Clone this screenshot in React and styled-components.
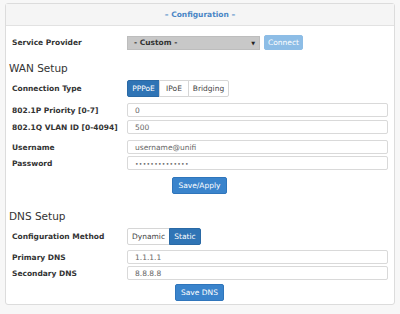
import React from 'react';
import styled, { createGlobalStyle } from 'styled-components';

const GlobalStyle = createGlobalStyle`
    body {
        margin: 0;
        background: #f7f7f7;
        font-family: "DejaVu Sans", Verdana, sans-serif;
    }
`;

const Page = styled.div`
    padding: 3px 5px 0 5px;
    height: 314px;
    box-sizing: border-box;
`;

const Panel = styled.div`
    background: #fff;
    border: 1px solid #dcdcdc;
    border-radius: 3px;
    height: 302px;
    box-sizing: border-box;
    display: flex;
    flex-direction: column;
`;

const Header = styled.div`
    height: 21px;
    background: #f5f5f5;
    border-bottom: 1px solid #e2e2e2;
    display: flex;
    align-items: center;
    justify-content: center;
    color: #4a86c5;
    font-size: 7.5px;
    font-weight: bold;
`;

const Body = styled.div`
    padding: 9px 6px 0 5px;
    display: flex;
    flex-direction: column;
`;

const Row = styled.div`
    display: flex;
    align-items: center;
    height: ${p => p.h || 14}px;
    margin-top: ${p => p.mt || 0}px;
`;

const Label = styled.div`
    width: 115px;
    flex: none;
    padding-left: 1px;
    font-size: 7.5px;
    font-weight: bold;
    color: #333;
`;

const Select = styled.div`
    width: 133px;
    height: 14px;
    box-sizing: border-box;
    background: #c8c8c8;
    border: 1px solid #bdbdbd;
    display: flex;
    align-items: center;
    justify-content: space-between;
    padding: 0 4px 0 6px;
    font-size: 7.5px;
    font-weight: bold;
    color: #333;
`;

const Arrow = styled.span`
    font-size: 5px;
    color: #222;
`;

const Button = styled.div`
    display: inline-flex;
    align-items: center;
    justify-content: center;
    height: ${p => p.h || 17}px;
    padding: 0 ${p => p.px || 5}px;
    background: ${p => (p.faded ? '#8dbde6' : '#3a84cc')};
    border: 1px solid ${p => (p.faded ? '#8dbde6' : '#2f75bb')};
    border-radius: 2px;
    box-sizing: border-box;
    color: #fff;
    font-size: 7.5px;
    margin-left: ${p => p.ml || 0}px;
`;

const Heading = styled.div`
    font-size: 10.5px;
    color: #333;
    height: 16px;
    line-height: 16px;
    margin-top: ${p => p.mt}px;
    margin-left: -2px;
`;

const Group = styled.div`
    display: flex;
    height: 17px;
`;

const Seg = styled.div`
    display: flex;
    align-items: center;
    justify-content: center;
    width: ${p => p.w}px;
    box-sizing: border-box;
    font-size: 7.5px;
    color: ${p => (p.active ? '#fff' : '#444')};
    background: ${p => (p.active ? '#2f74b5' : '#fff')};
    border: 1px solid ${p => (p.active ? '#2a69a5' : '#d6d6d6')};
    margin-left: -1px;
    &:first-child { border-radius: 2px 0 0 2px; margin-left: 0; }
    &:last-child { border-radius: 0 2px 2px 0; }
`;

const Input = styled.div`
    flex: 1;
    height: 14px;
    box-sizing: border-box;
    border: 1px solid #d9d9d9;
    border-radius: 2px;
    display: flex;
    align-items: center;
    padding-left: 7px;
    font-size: 7.5px;
    color: #666;
`;

const Dots = styled.span`
    font-size: 6px;
    letter-spacing: 0.3px;
`;

const Center = styled.div`
    display: flex;
    justify-content: center;
    margin-top: ${p => p.mt}px;
`;

const App = () => {
    return (
        <Page>
            <GlobalStyle />
            <Panel>
                <Header>– Configuration –</Header>
                <Body>
                    <Row h={15}>
                        <Label>Service Provider</Label>
                        <Select>
                            <span>- Custom -</span>
                            <Arrow>▼</Arrow>
                        </Select>
                        <Button faded h={15} px={3} ml={4}>Connect</Button>
                    </Row>

                    <Heading mt={10}>WAN Setup</Heading>

                    <Row h={17} mt={4}>
                        <Label>Connection Type</Label>
                        <Group>
                            <Seg w={33} active>PPPoE</Seg>
                            <Seg w={30}>IPoE</Seg>
                            <Seg w={41}>Bridging</Seg>
                        </Group>
                    </Row>
                    <Row mt={6}>
                        <Label>802.1P Priority [0-7]</Label>
                        <Input>0</Input>
                    </Row>
                    <Row mt={3}>
                        <Label>802.1Q VLAN ID [0-4094]</Label>
                        <Input>500</Input>
                    </Row>
                    <Row mt={6}>
                        <Label>Username</Label>
                        <Input>username@unifi</Input>
                    </Row>
                    <Row mt={2}>
                        <Label>Password</Label>
                        <Input><Dots>••••••••••••••</Dots></Input>
                    </Row>
                    <Center mt={7}>
                        <Button>Save/Apply</Button>
                    </Center>

                    <Heading mt={14}>DNS Setup</Heading>

                    <Row h={17} mt={4}>
                        <Label>Configuration Method</Label>
                        <Group>
                            <Seg w={43}>Dynamic</Seg>
                            <Seg w={32} active>Static</Seg>
                        </Group>
                    </Row>
                    <Row mt={5}>
                        <Label>Primary DNS</Label>
                        <Input>1.1.1.1</Input>
                    </Row>
                    <Row mt={2}>
                        <Label>Secondary DNS</Label>
                        <Input>8.8.8.8</Input>
                    </Row>
                    <Center mt={4}>
                        <Button>Save DNS</Button>
                    </Center>
                </Body>
            </Panel>
        </Page>
    );
};

export default App;
